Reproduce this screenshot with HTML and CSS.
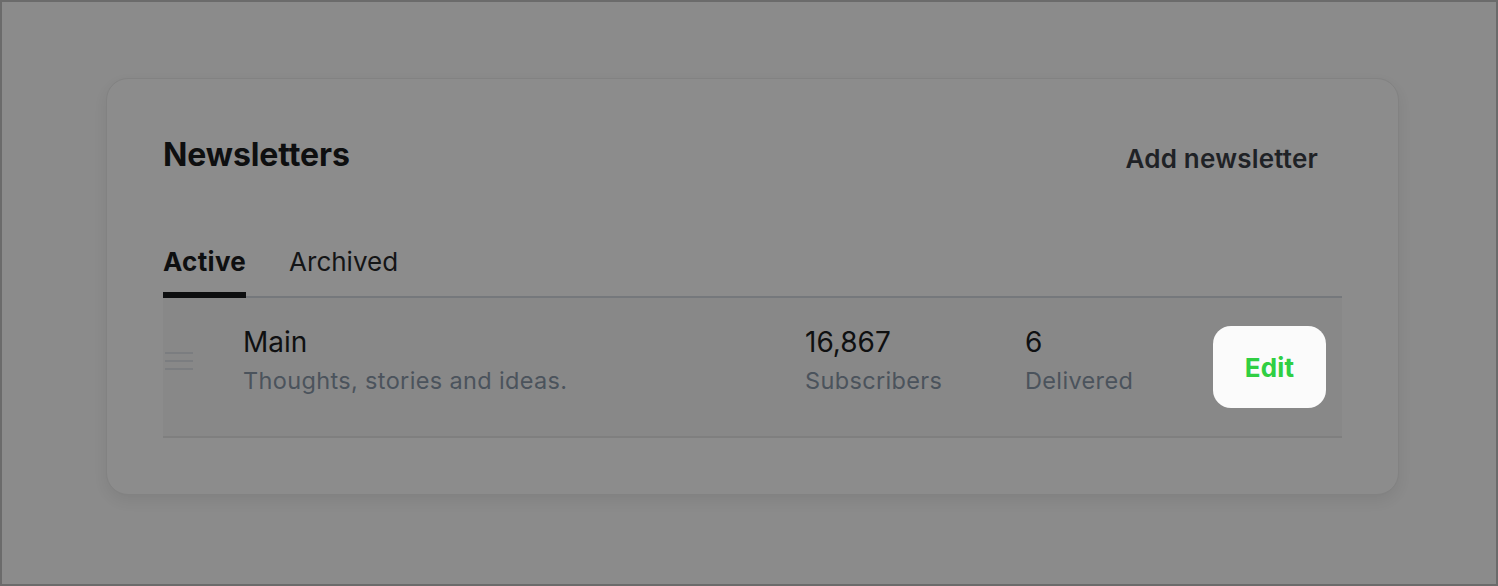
FILE: index.html
```html
<!DOCTYPE html>
<html lang="en">
<head>
<meta charset="utf-8">
<title>Newsletters</title>
<link rel="stylesheet" href="styles.css">
</head>
<body>
<div class="frame">
  <section class="card">
    <header class="card-head">
      <h2 class="title">Newsletters</h2>
      <button class="add-btn">Add newsletter</button>
    </header>
    <nav class="tabs">
      <span class="tab tab-active">Active</span>
      <span class="tab">Archived</span>
    </nav>
    <div class="list">
      <div class="row">
        <div class="handle">
          <svg width="28" height="18" viewBox="0 0 28 18"><rect x="0" y="0" width="28" height="2" fill="#7b7d80"/><rect x="0" y="8" width="28" height="2" fill="#7b7d80"/><rect x="0" y="16" width="28" height="2" fill="#7b7d80"/></svg>
        </div>
        <div class="info">
          <div class="name">Main</div>
          <div class="desc">Thoughts, stories and ideas.</div>
        </div>
        <div class="stat stat-subs">
          <div class="num">16,867</div>
          <div class="label">Subscribers</div>
        </div>
        <div class="stat stat-deliv">
          <div class="num">6</div>
          <div class="label">Delivered</div>
        </div>
        <button class="edit-btn">Edit</button>
      </div>
    </div>
  </section>
</div>
</body>
</html>
```

FILE: styles.css
```css
* { box-sizing: border-box; }
html, body { margin: 0; padding: 0; }
body { font-family: Inter, "Noto Sans", sans-serif; }

.frame {
  width: 1498px;
  height: 586px;
  border: 2px solid #6b6b6b;
  background: #8b8b8b;
  padding: 76px 98px 0 104px;
}

.card {
  width: 1293px;
  height: 417px;
  border: 1px solid #828282;
  border-radius: 22px;
  background: #8c8c8c;
  box-shadow: 0 6px 14px rgba(0,0,0,0.07);
  padding: 54px 56px 0 56px;
}

.card-head {
  display: flex;
  justify-content: space-between;
  align-items: flex-start;
}
.title {
  margin: 0;
  font-size: 32px;
  line-height: 44px;
  font-weight: 700;
  color: #0e0f10;
  letter-spacing: -0.1px;
}
.add-btn {
  font-family: inherit;
  border: 0;
  background: transparent;
  padding: 0 24px 0 0;
  margin-top: 4px;
  font-size: 26px;
  line-height: 44px;
  font-weight: 600;
  color: #1f2226;
  letter-spacing: 0.2px;
}

.tabs {
  display: flex;
  gap: 43px;
  margin-top: 63px;
  border-bottom: 2px solid #75787c;
}
.tab {
  font-size: 26px;
  line-height: 36px;
  color: #141516;
  padding-bottom: 12px;
  margin-bottom: -2px;
  border-bottom: 6px solid transparent;
  letter-spacing: 0;
}
.tab-active {
  font-weight: 700;
  color: #0e0f10;
  border-bottom-color: #0d0e0f;
  letter-spacing: 0.3px;
}

.row {
  display: flex;
  align-items: center;
  height: 140px;
  background: #888888;
  border-bottom: 2px solid #7f7f7f;
}
.handle {
  width: 80px;
  padding-left: 2px;
  display: flex;
  align-items: center;
}
.handle svg { display: block; margin-top: -12px; }
.info, .stat { padding-bottom: 10px; }
.info { flex: 1; }
.name, .num {
  font-size: 28px;
  line-height: 38px;
  color: #0f1011;
}
.desc, .label {
  font-size: 23.5px;
  line-height: 40px;
  color: #4b535c;
  letter-spacing: 0.35px;
}
.stat-subs { width: 220px; }
.stat-deliv { width: 188px; }
.edit-btn {
  font-family: inherit;
  width: 113px;
  height: 82px;
  margin-right: 16px;
  border: 0;
  border-radius: 18px;
  background: #fbfbfb;
  color: #30cf43;
  font-size: 26px;
  font-weight: 700;
  letter-spacing: 0.2px;
}
```
